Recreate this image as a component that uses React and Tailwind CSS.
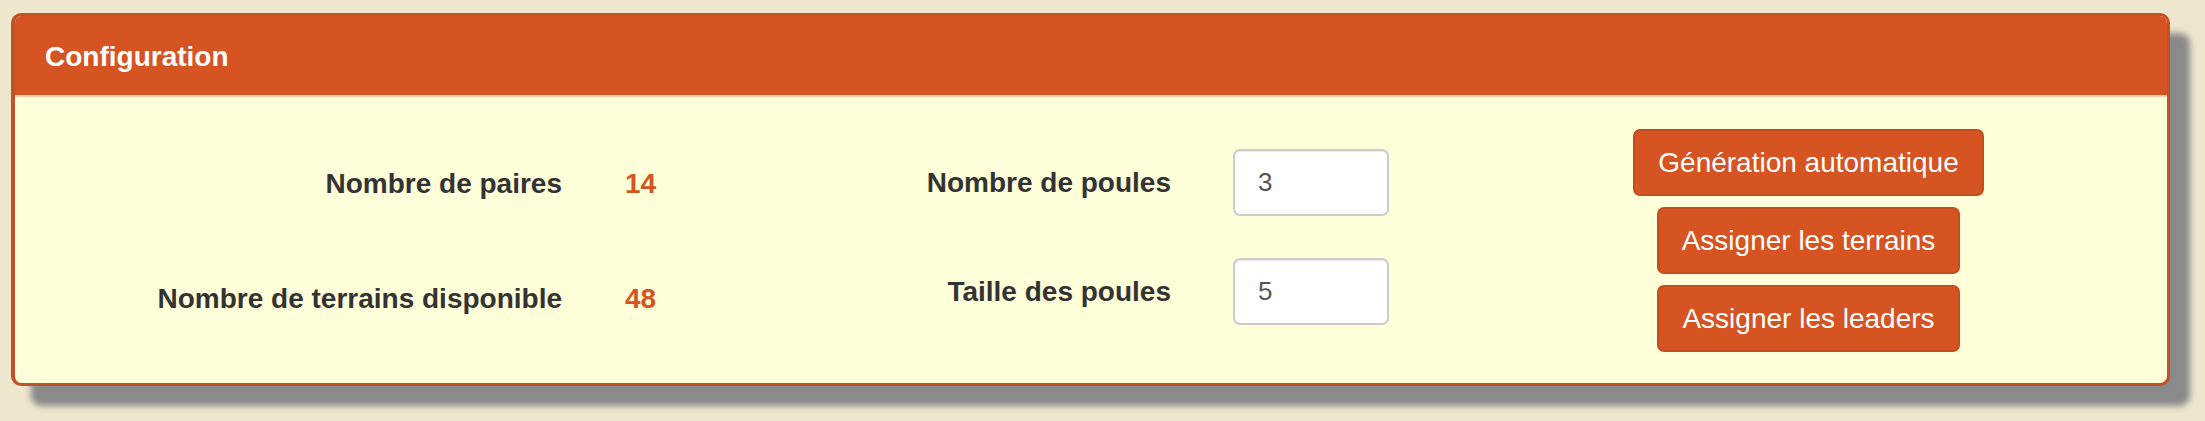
// Configuration panel: header bar, three-column body (stats, inputs, actions).
const FONT = { fontFamily: '"Liberation Sans", Arial, Helvetica, sans-serif' };

function Stat({ label, value }) {
  return (
    <div className="flex h-[67px] items-center">
      <div className="w-[547px] text-right text-[28px] font-bold text-[#333]">{label}</div>
      <div className="ml-[63px] text-[28px] font-bold text-[#d55422]">{value}</div>
    </div>
  );
}

function Field({ label, value }) {
  return (
    <div className="flex h-[67px] items-center">
      <div className="w-[470px] text-right text-[28px] font-bold text-[#333]">{label}</div>
      <input
        readOnly
        value={value}
        className="ml-[62px] h-[67px] w-[156px] rounded-[7px] border-2 border-[#cccccc] bg-white px-[23px] text-[26px] text-[#555] shadow-[inset_0_1px_1px_rgba(0,0,0,0.08)] outline-none"
        style={FONT}
      />
    </div>
  );
}

function Action({ children }) {
  return (
    <button
      className="h-[67px] rounded-[7px] border-2 border-[#c44d1f] bg-[#d55422] px-[23px] text-[28px] leading-none text-white"
      style={FONT}
    >
      {children}
    </button>
  );
}

export default function App() {
  return (
    <div className="h-[421px] w-[2205px] bg-[#eee6cd] pl-[11px] pt-[13px]" style={FONT}>
      <div className="h-[373px] w-[2159px] overflow-hidden rounded-[10px] border-[3px] border-l-4 border-[#c0522a] bg-[#ffffd9] shadow-[20px_20px_6px_#8a8a8a]">
        <div className="flex h-[81px] items-center border-b-2 border-[#f3cfae] bg-[#d55422] pl-[30px] pt-[3px]">
          <h2 className="text-[28px] font-bold text-white">Configuration</h2>
        </div>
        <div className="flex items-start pt-[32px]">
          <div className="mt-[21px] flex w-[686px] flex-col gap-[48px]">
            <Stat label="Nombre de paires" value="14" />
            <Stat label="Nombre de terrains disponible" value="48" />
          </div>
          <div className="mt-[20px] flex w-[749px] flex-col gap-[42px]">
            <Field label="Nombre de poules" value="3" />
            <Field label="Taille des poules" value="5" />
          </div>
          <div className="flex flex-1 flex-col items-center gap-[11px]">
            <Action>Génération automatique</Action>
            <Action>Assigner les terrains</Action>
            <Action>Assigner les leaders</Action>
          </div>
        </div>
      </div>
    </div>
  );
}
